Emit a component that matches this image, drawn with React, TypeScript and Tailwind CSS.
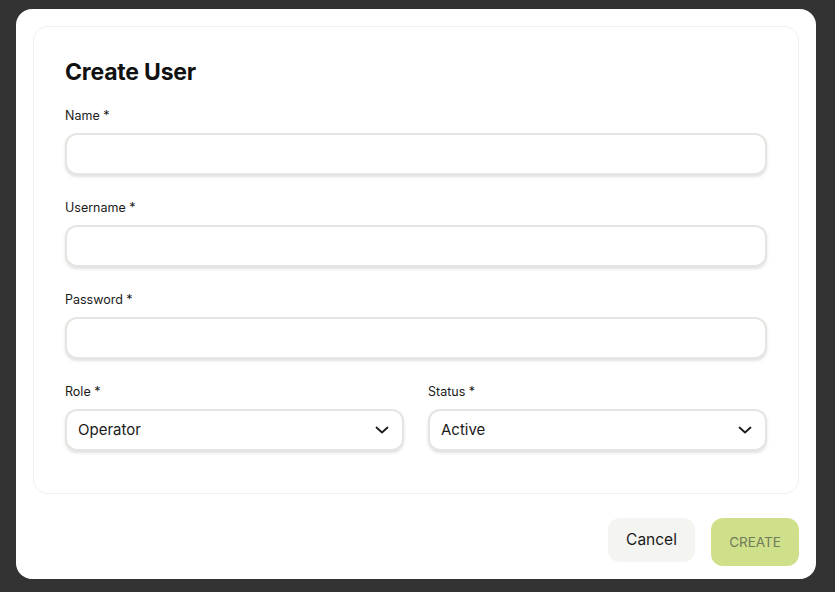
import React from "react";

function Field({ label, children }: { label: string; children?: React.ReactNode }) {
  return (
    <div className="flex flex-col">
      <label className="text-[12.5px] text-[#1a1a1a] h-[17px] leading-[17px]">{label}</label>
      <div className="mt-[9px] h-[42px] rounded-[12px] border-2 border-[#e6e5e1] bg-white shadow-[0_2px_3px_rgba(0,0,0,0.12)] flex items-center px-[11px] text-[15px] text-[#1a1a1a]">
        {children}
      </div>
    </div>
  );
}

function Chevron() {
  return (
    <svg width="16" height="16" viewBox="0 0 16 16" className="ml-auto mr-[1px]">
      <path d="M2.5 5.5 L8 10.5 L13.5 5.5" fill="none" stroke="#1a1a1a" strokeWidth="1.8" strokeLinecap="round" strokeLinejoin="round" />
    </svg>
  );
}

export default function App() {
  return (
    <div className="w-[835px] h-[592px] bg-[#333333] pt-[9px] px-[16px] overflow-hidden" style={{ fontFamily: "Inter, 'Liberation Sans', sans-serif" }}>
      <div className="w-[800px] h-[570px] bg-white rounded-[16px] pt-[17px] px-[17px] flex flex-col">
        <div className="rounded-[14px] border border-[#f1f1ef] px-[31px] pt-[31px] h-[468px]">
          <h1 className="text-[23px] font-bold text-[#111] leading-[28px] tracking-[-0.2px]">Create User</h1>
          <div className="mt-[21px] flex flex-col gap-[24px]">
            <Field label="Name *" />
            <Field label="Username *" />
            <Field label="Password *" />
            <div className="grid grid-cols-2 gap-[24px]">
              <Field label="Role *">Operator<Chevron /></Field>
              <Field label="Status *">Active<Chevron /></Field>
            </div>
          </div>
        </div>
        <div className="flex justify-end gap-[16px] mt-[24px]">
          <button className="w-[87px] h-[44px] rounded-[12px] bg-[#f4f4f1] text-[15.5px] text-[#1a1a1a]">Cancel</button>
          <button className="w-[88px] h-[48px] rounded-[12px] bg-[#cfe08b] text-[13.5px] text-[#6f7a5a]">CREATE</button>
        </div>
      </div>
    </div>
  );
}
